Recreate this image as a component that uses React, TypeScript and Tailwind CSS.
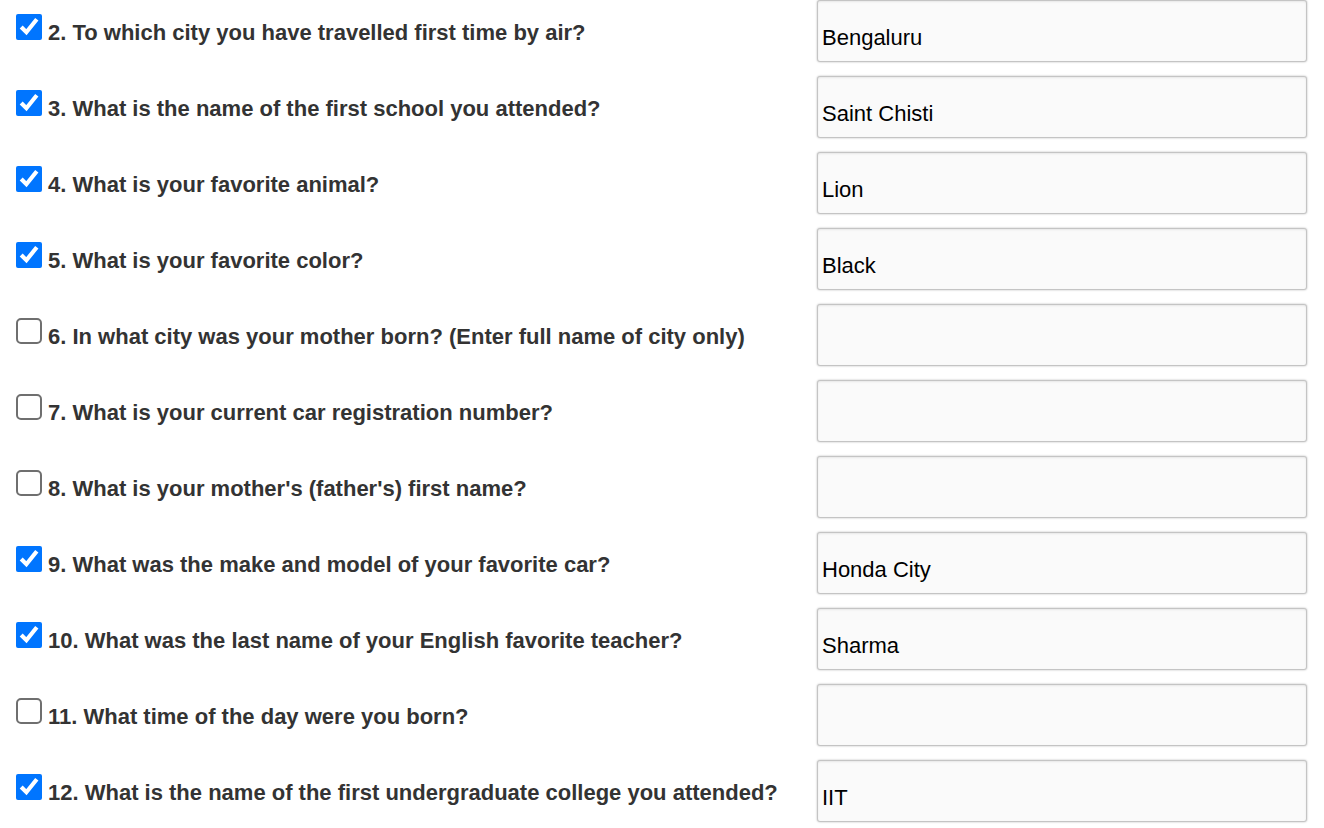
const rows = [
  { q: '2. To which city you have travelled first time by air?', a: 'Bengaluru', checked: true },
  { q: '3. What is the name of the first school you attended?', a: 'Saint Chisti', checked: true },
  { q: '4. What is your favorite animal?', a: 'Lion', checked: true },
  { q: '5. What is your favorite color?', a: 'Black', checked: true },
  { q: '6. In what city was your mother born? (Enter full name of city only)', a: '', checked: false },
  { q: '7. What is your current car registration number?', a: '', checked: false },
  { q: "8. What is your mother's (father's) first name?", a: '', checked: false },
  { q: '9. What was the make and model of your favorite car?', a: 'Honda City', checked: true },
  { q: '10. What was the last name of your English favorite teacher?', a: 'Sharma', checked: true },
  { q: '11. What time of the day were you born?', a: '', checked: false },
  { q: '12. What is the name of the first undergraduate college you attended?', a: 'IIT', checked: true },
];

export default function App() {
  return (
    <div className="w-[1324px] h-[828px] bg-white overflow-hidden font-['Liberation_Sans',Arial,sans-serif]">
      <div className="flex flex-col gap-[14px]">
        {rows.map((r) => (
          <div key={r.q} className="flex h-[62px]">
            <div className="w-[817px] flex items-start pl-4">
              {r.checked ? (
                <input
                  type="checkbox"
                  defaultChecked
                  className="m-0 mt-[14px] w-[26px] h-[26px] accent-[#0075ff] shrink-0"
                />
              ) : (
                <input
                  type="checkbox"
                  className="appearance-none m-0 mt-[14px] w-[26px] h-[26px] shrink-0 bg-white border-2 border-[#6f6f6f] rounded-[5px]"
                />
              )}
              <label className="ml-[6px] mt-[20px] text-[22px] leading-[26px] font-bold text-[#333333] whitespace-nowrap">
                {r.q}
              </label>
            </div>
            <input
              type="text"
              defaultValue={r.a}
              className="w-[490px] h-[62px] pl-1 pr-1 pt-[14px] pb-0 border border-[#c4c4c4] rounded-[3px] bg-[#fafafa] text-[22px] text-black font-['Liberation_Sans',Arial,sans-serif] shadow-[0_0_2px_rgba(0,0,0,0.3),inset_0_1px_2px_rgba(0,0,0,0.08)] outline-none"
            />
          </div>
        ))}
      </div>
    </div>
  );
}
